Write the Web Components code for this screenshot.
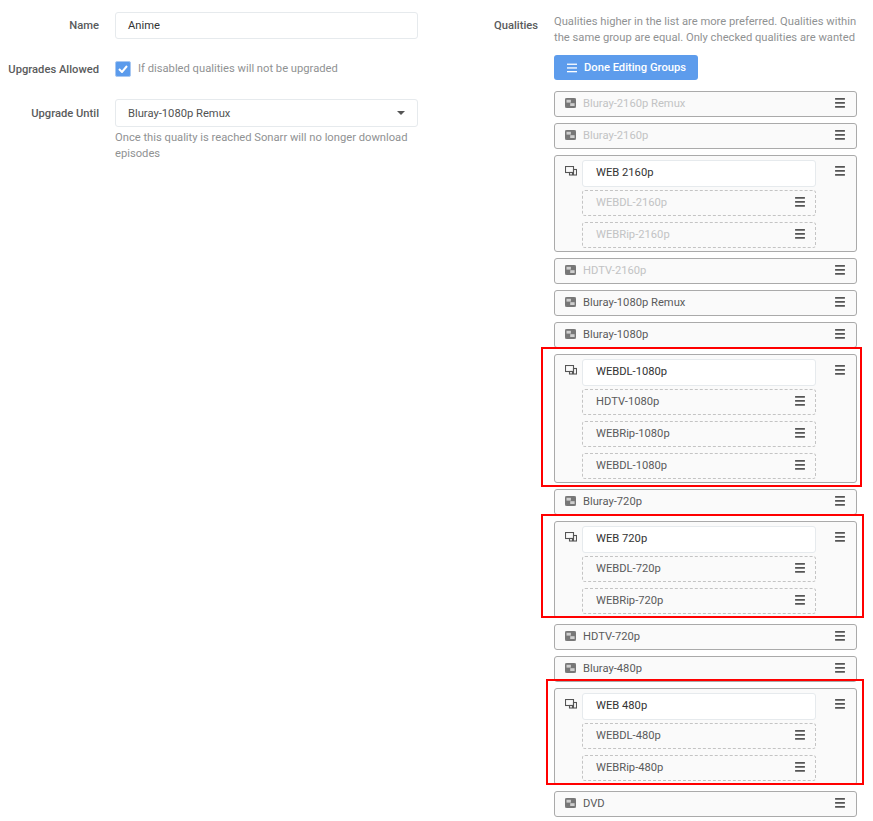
<!DOCTYPE html>
<html>
<head>
<meta charset="utf-8">
<style>
  html, body { margin: 0; padding: 0; background: #fff; }
  body { font-family: Roboto, "Liberation Sans", sans-serif; font-size: 11.2px; color: #515253; }
  profile-page { width: 873px; height: 821px; }
</style>
</head>
<body>
<profile-page>
  <form-group slot="left" label="Name"><text-field>Anime</text-field></form-group>
  <form-group slot="left" label="Upgrades Allowed" style="--group-top:16px;--label-top:7px"><check-field>If disabled qualities will not be upgraded</check-field></form-group>
  <form-group slot="left" label="Upgrade Until" style="--group-top:17px;--label-top:7px">
    <select-field>Bluray-1080p Remux</select-field>
    <help-text style="--help-top:3px">Once this quality is reached Sonarr will no longer download episodes</help-text>
  </form-group>

  <quality-row slot="right" disabled>Bluray-2160p Remux</quality-row>
  <quality-row slot="right" disabled>Bluray-2160p</quality-row>
  <quality-group slot="right" name="WEB 2160p">
    <quality-item disabled>WEBDL-2160p</quality-item>
    <quality-item disabled>WEBRip-2160p</quality-item>
  </quality-group>
  <quality-row slot="right" disabled>HDTV-2160p</quality-row>
  <quality-row slot="right">Bluray-1080p Remux</quality-row>
  <quality-row slot="right">Bluray-1080p</quality-row>
  <quality-group slot="right" name="WEBDL-1080p">
    <quality-item>HDTV-1080p</quality-item>
    <quality-item>WEBRip-1080p</quality-item>
    <quality-item>WEBDL-1080p</quality-item>
  </quality-group>
  <quality-row slot="right">Bluray-720p</quality-row>
  <quality-group slot="right" name="WEB 720p">
    <quality-item>WEBDL-720p</quality-item>
    <quality-item>WEBRip-720p</quality-item>
  </quality-group>
  <quality-row slot="right">HDTV-720p</quality-row>
  <quality-row slot="right">Bluray-480p</quality-row>
  <quality-group slot="right" name="WEB 480p">
    <quality-item>WEBDL-480p</quality-item>
    <quality-item>WEBRip-480p</quality-item>
  </quality-group>
  <quality-row slot="right">DVD</quality-row>
</profile-page>

<script>
const HAMBURGER = `<svg width="10" height="10" viewBox="0 0 10 10" fill="#555"><rect width="10" height="1.7" rx=".4"/><rect y="4" width="10" height="1.7" rx=".4"/><rect y="8" width="10" height="1.7" rx=".4"/></svg>`;

// fa-object-group
const GROUP_ICON = `<svg width="11" height="10" viewBox="0 0 11 10"><rect width="11" height="10" fill="#777"/><rect x="1.5" y="1.8" width="4.4" height="2.8" fill="#cfcfcf"/><rect x="5.2" y="5.2" width="4.4" height="2.8" fill="#cfcfcf"/><rect x="0" y="0" width="1.2" height="1.2" fill="#aaa"/><rect x="9.8" y="0" width="1.2" height="1.2" fill="#aaa"/><rect x="0" y="8.8" width="1.2" height="1.2" fill="#aaa"/><rect x="9.8" y="8.8" width="1.2" height="1.2" fill="#aaa"/></svg>`;

// fa-object-ungroup
const UNGROUP_ICON = `<svg width="12" height="10" viewBox="0 0 12 10" fill="none" stroke="#555" stroke-width="1.1"><rect x="0.5" y="0.5" width="8" height="6"/><rect x="4.5" y="6.5" width="3" height="2.5"/><rect x="8.5" y="3.5" width="3" height="5.5"/></svg>`;

class ProfilePage extends HTMLElement {
  constructor() {
    super();
    this.attachShadow({ mode: 'open' }).innerHTML = `
      <style>
        :host { display: block; position: relative; overflow: hidden; }
        .columns { display: flex; align-items: flex-start; }
        .left { width: 418px; padding-top: 12px; box-sizing: border-box; display: flex; flex-direction: column; }
        .qualities { display: flex; margin-left: 64px; padding-top: 14px; }
        .label { width: 56px; text-align: right; font-weight: 500; padding-top: 5px; flex: none; color: #5a5b5c; }
        .body { width: 303px; margin-left: 16px; }
        .help { color: #909293; line-height: 16px; white-space: nowrap; }
        .button { display: flex; align-items: center; gap: 7px; width: 144px; height: 25px; margin: 9px 0 11px; padding-left: 13px; box-sizing: border-box; background: #5d9cec; border-radius: 3px; color: #fff; font-weight: 500; }
        .button svg { flex: none; }
        .list { display: flex; flex-direction: column; gap: 6px; }
        .mark { position: absolute; border: 2px solid #f00; box-sizing: border-box; }
      </style>
      <div class="columns">
        <div class="left"><slot name="left"></slot></div>
        <div class="qualities">
          <div class="label">Qualities</div>
          <div class="body">
            <div class="help">Qualities higher in the list are more preferred. Qualities within<br>the same group are equal. Only checked qualities are wanted</div>
            <div class="button"><svg width="10" height="10" viewBox="0 0 10 10" fill="#fff"><rect y="0.6" width="10" height="1.3"/><rect y="4.3" width="10" height="1.3"/><rect y="8" width="10" height="1.3"/></svg>Done Editing Groups</div>
            <div class="list"><slot name="right"></slot></div>
          </div>
        </div>
      </div>
      <div class="mark" style="left:541px;top:347px;width:321px;height:140px"></div>
      <div class="mark" style="left:541px;top:514px;width:323px;height:104px"></div>
      <div class="mark" style="left:546px;top:679px;width:318px;height:106px"></div>`;
  }
}

class FormGroup extends HTMLElement {
  constructor() {
    super();
    this.attachShadow({ mode: 'open' }).innerHTML = `
      <style>
        :host { display: flex; margin-top: var(--group-top, 0); }
        .label { width: 99px; flex: none; text-align: right; font-weight: 500; padding-top: var(--label-top, 6px); line-height: 15px; color: #5a5b5c; white-space: nowrap; }
        .field { flex: 1; margin-left: 16px; min-width: 0; }
      </style>
      <div class="label"></div>
      <div class="field"><slot></slot></div>`;
    this.shadowRoot.querySelector('.label').textContent = this.getAttribute('label');
  }
}

class TextField extends HTMLElement {
  constructor() {
    super();
    this.attachShadow({ mode: 'open' }).innerHTML = `
      <style>
        :host { display: flex; align-items: center; height: 27px; box-sizing: border-box; padding-left: 12px; background: #fff; border: 1px solid #e6eaed; border-radius: 3px; color: #333; }
      </style>
      <slot></slot>`;
  }
}

class SelectField extends HTMLElement {
  constructor() {
    super();
    this.attachShadow({ mode: 'open' }).innerHTML = `
      <style>
        :host { display: flex; align-items: center; justify-content: space-between; height: 28px; box-sizing: border-box; padding: 0 12px 0 12px; background: #fff; border: 1px solid #e6eaed; border-radius: 3px; color: #515253; }
        .caret { width: 0; height: 0; border: 4px solid transparent; border-top: 4px solid #555; border-bottom: 0; }
      </style>
      <slot></slot><span class="caret"></span>`;
  }
}

class CheckField extends HTMLElement {
  constructor() {
    super();
    this.attachShadow({ mode: 'open' }).innerHTML = `
      <style>
        :host { display: flex; align-items: center; gap: 7px; height: 27px; color: #909293; white-space: nowrap; }
        .box { width: 16px; height: 16px; background: #5b9bec; border: 1px solid #a8c8f2; box-sizing: border-box; border-radius: 2px; display: flex; align-items: center; justify-content: center; flex: none; }
      </style>
      <span class="box"><svg width="10" height="8" viewBox="0 0 10 8" fill="none" stroke="#fff" stroke-width="2"><path d="M1 4l3 3 5-6"/></svg></span>
      <slot></slot>`;
  }
}

class HelpText extends HTMLElement {
  constructor() {
    super();
    this.attachShadow({ mode: 'open' }).innerHTML = `
      <style>
        :host { display: block; margin-top: var(--help-top, 0); color: #909293; line-height: 16px; }
      </style>
      <slot></slot>`;
  }
}

class QualityRow extends HTMLElement {
  constructor() {
    super();
    this.attachShadow({ mode: 'open' }).innerHTML = `
      <style>
        :host { display: flex; align-items: center; height: 26px; box-sizing: border-box; padding: 0 11px 2px 10px; background: #fafafa; border: 1px solid #aaa; border-radius: 3px; color: #5a5b5c; }
        :host([disabled]) { color: #c2c3c4; }
        .icon { display: flex; margin-right: 7px; flex: none; }
        .text { flex: 1; }
        .handle { display: flex; flex: none; }
      </style>
      <span class="icon">${GROUP_ICON}</span><span class="text"><slot></slot></span><span class="handle">${HAMBURGER}</span>`;
  }
}

class QualityGroup extends HTMLElement {
  constructor() {
    super();
    this.attachShadow({ mode: 'open' }).innerHTML = `
      <style>
        :host { display: flex; box-sizing: border-box; padding: 4px 11px 3px 10px; background: #fafafa; border: 1px solid #aaa; border-radius: 3px; }
        .icon { display: flex; margin: 6px 5px 0 0; flex: none; align-self: flex-start; }
        .main { width: 234px; flex: none; display: flex; flex-direction: column; gap: 6px; }
        .name { height: 27px; box-sizing: border-box; display: flex; align-items: center; padding: 0 0 2px 13px; background: #fff; border: 1px solid #e6eaed; border-radius: 3px; color: #333; margin-bottom: -3px; }
        .handle { display: flex; margin: 6px 0 0 auto; flex: none; align-self: flex-start; }
      </style>
      <span class="icon">${UNGROUP_ICON}</span>
      <div class="main"><div class="name"></div><slot></slot></div>
      <span class="handle">${HAMBURGER}</span>`;
    this.shadowRoot.querySelector('.name').textContent = this.getAttribute('name');
  }
}

class QualityItem extends HTMLElement {
  constructor() {
    super();
    this.attachShadow({ mode: 'open' }).innerHTML = `
      <style>
        :host { display: flex; align-items: center; justify-content: space-between; height: 26px; box-sizing: border-box; padding: 0 10px 2px 13px; border: 1px dashed #c4c4c4; border-radius: 3px; color: #5a5b5c; }
        :host([disabled]) { color: #c2c3c4; }
        .handle { display: flex; }
      </style>
      <slot></slot><span class="handle">${HAMBURGER}</span>`;
  }
}

customElements.define('profile-page', ProfilePage);
customElements.define('form-group', FormGroup);
customElements.define('text-field', TextField);
customElements.define('select-field', SelectField);
customElements.define('check-field', CheckField);
customElements.define('help-text', HelpText);
customElements.define('quality-row', QualityRow);
customElements.define('quality-group', QualityGroup);
customElements.define('quality-item', QualityItem);
</script>
</body>
</html>
